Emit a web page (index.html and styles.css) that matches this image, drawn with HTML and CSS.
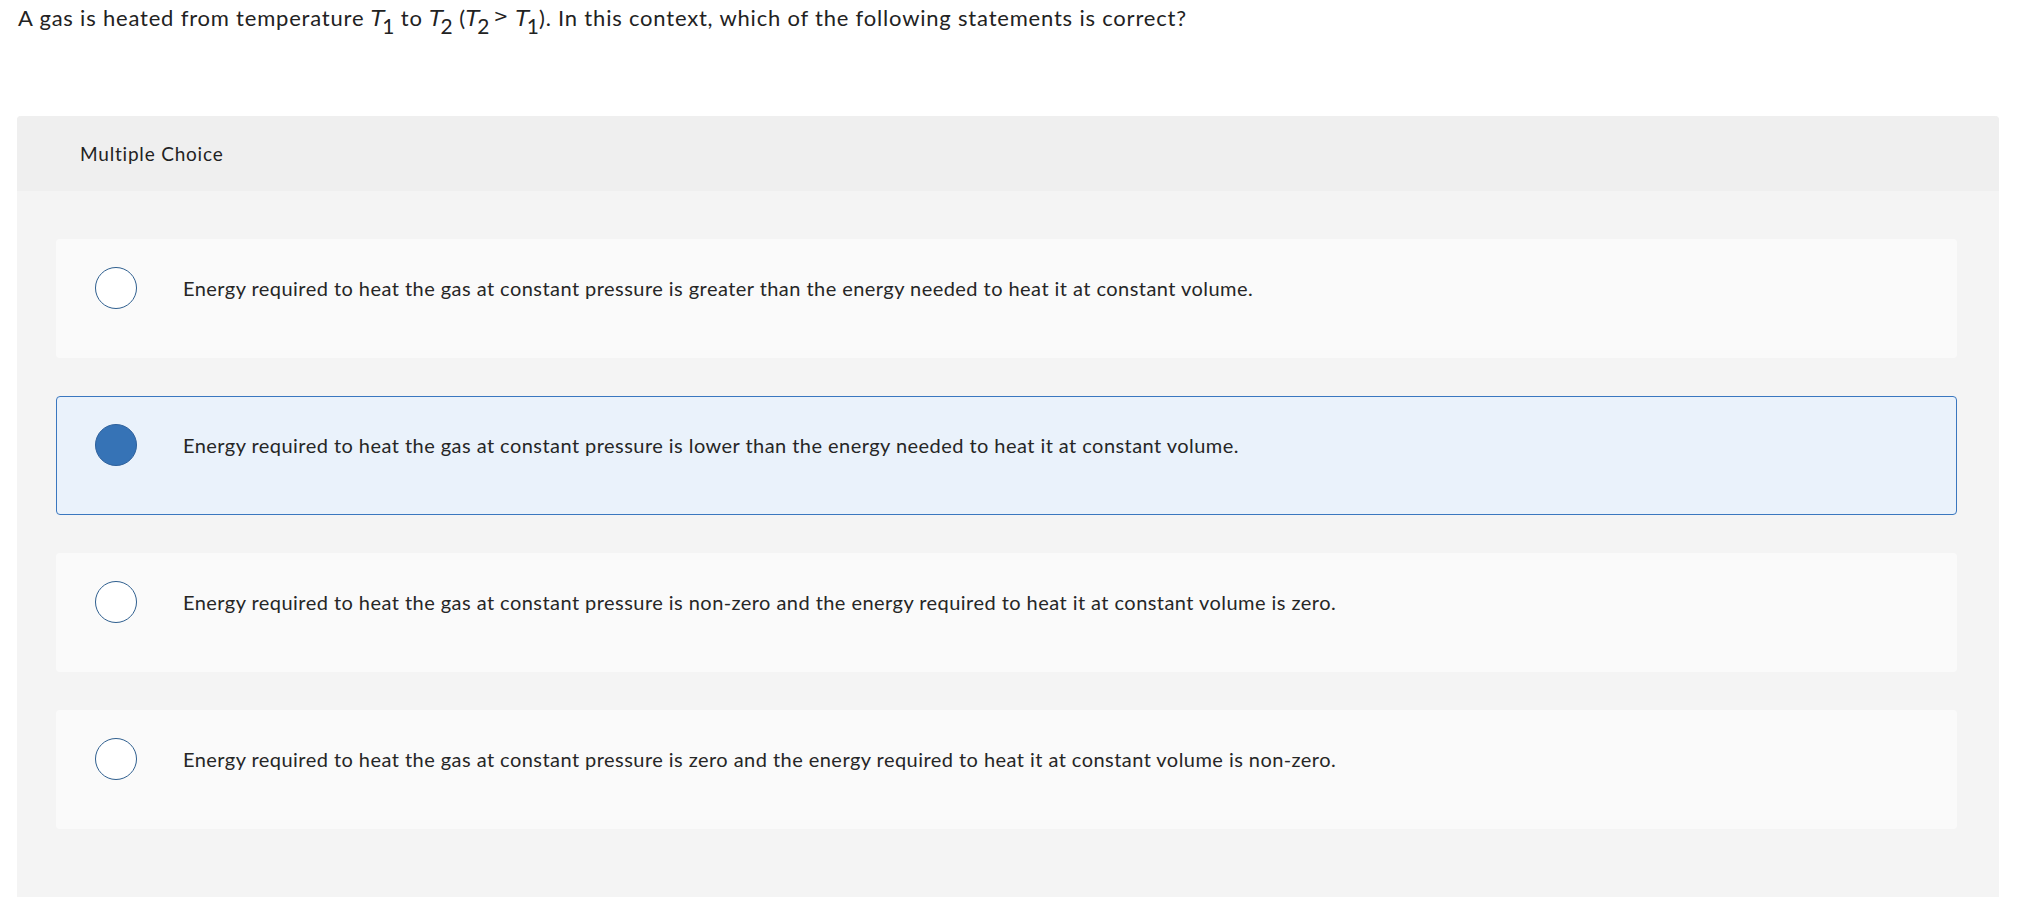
FILE: index.html
```html
<!DOCTYPE html>
<html lang="en">
<head>
<meta charset="utf-8">
<title>Multiple Choice</title>
<link rel="stylesheet" href="styles.css">
</head>
<body>
<div class="page">
  <p class="question">A gas is heated from temperature <span class="math"><i>T</i><sub>1</sub></span> to <span class="math"><i>T</i><sub>2</sub></span> (<span class="math"><i>T</i><sub>2</sub></span><span class="gt">&gt;</span> <span class="math"><i>T</i><sub>1</sub></span>). In this context, which of the following statements is correct?</p>

  <section class="panel">
    <header class="panel-head">Multiple Choice</header>
    <div class="panel-body">
      <label class="choice">
        <span class="radio"></span>
        <span class="choice-text">Energy required to heat the gas at constant pressure is greater than the energy needed to heat it at constant volume.</span>
      </label>
      <label class="choice selected">
        <span class="radio"></span>
        <span class="choice-text">Energy required to heat the gas at constant pressure is lower than the energy needed to heat it at constant volume.</span>
      </label>
      <label class="choice">
        <span class="radio"></span>
        <span class="choice-text">Energy required to heat the gas at constant pressure is non-zero and the energy required to heat it at constant volume is zero.</span>
      </label>
      <label class="choice">
        <span class="radio"></span>
        <span class="choice-text">Energy required to heat the gas at constant pressure is zero and the energy required to heat it at constant volume is non-zero.</span>
      </label>
    </div>
  </section>
</div>
</body>
</html>
```

FILE: styles.css
```css
* { box-sizing: border-box; }

html, body {
  margin: 0;
  padding: 0;
  background: #ffffff;
}

body {
  font-family: "Lato", "Liberation Sans", sans-serif;
  color: #222222;
}

.page {
  padding: 0 26px 0 17px;
}

.question {
  margin: 0;
  padding: 2px 0 0 1px;
  font-size: 22px;
  line-height: 28px;
  letter-spacing: 0.8px;
  height: 116px;
  color: #222222;
}

.math i {
  font-family: "DejaVu Sans", sans-serif;
  font-style: italic;
  font-weight: 300;
  letter-spacing: 0;
}

.math sub {
  font-size: 0.95em;
  vertical-align: -0.4em;
  line-height: 0;
  margin-left: -2px;
  letter-spacing: 0;
}

.gt {
  font-family: "DejaVu Sans", sans-serif;
  font-size: 0.8em;
  vertical-align: 0.2em;
  margin-left: 4px;
}

.panel {
  width: 1982px;
  min-height: 781px;
  background: #f4f4f4;
  border-radius: 4px 4px 0 0;
}

.panel-head {
  height: 75px;
  background: #efefef;
  border-radius: 4px 4px 0 0;
  padding: 0 0 0 63px;
  display: flex;
  align-items: center;
  font-size: 19px;
  letter-spacing: 0.8px;
  color: #222222;
}

.panel-body {
  padding: 48px 42px 60px 39px;
  display: flex;
  flex-direction: column;
  gap: 38px;
}

.choice {
  display: flex;
  align-items: center;
  height: 119px;
  padding: 27px 0 48px 38px;
  background: #fafafa;
  border: 1px solid transparent;
  border-radius: 4px;
}

.choice.selected {
  background: #eaf2fb;
  border-color: #3a77bf;
}

.radio {
  flex: 0 0 auto;
  width: 42px;
  height: 42px;
  border-radius: 50%;
  border: 1px solid #2f5f8f;
  background: #ffffff;
}

.choice.selected .radio {
  background: #3673b6;
  border-color: #2e619c;
}

.choice-text {
  margin-left: 46px;
  font-size: 20px;
  line-height: 24px;
  letter-spacing: 0.45px;
  color: #262626;
}
```
